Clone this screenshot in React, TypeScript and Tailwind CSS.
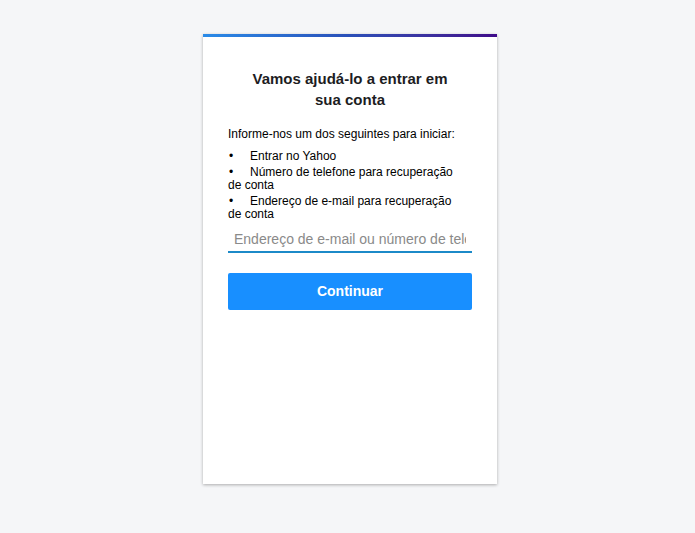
export default function App() {
  return (
    <div
      className="min-h-[533px] w-full bg-[#f5f6f8] pt-[34px]"
      style={{ fontFamily: '"Liberation Sans", Arial, sans-serif' }}
    >
      <div className="ml-[203px] flex h-[450px] w-[294px] flex-col bg-white shadow-[0_1px_3px_rgba(0,0,0,0.3)]">
        <div className="h-[3px] bg-gradient-to-r from-[#2a8be8] via-[#2a4fb8] to-[#3f0a8a]" />
        <div className="flex flex-col px-[25px] pt-[31px]">
          <h1 className="mx-auto w-[215px] text-center text-[15px] font-bold leading-[21px] text-[#1d1d1f]">
            Vamos ajudá-lo a entrar em sua conta
          </h1>
          <p className="mt-[16px] text-[12px] leading-[16px] text-black">
            Informe-nos um dos seguintes para iniciar:
          </p>
          <ul className="mt-[8px] w-[225px] text-[12px] leading-[13px] text-black">
            <li className="mb-[3px]">
              <span className="inline-block w-[22px] pl-[1px]">•</span>Entrar no Yahoo
            </li>
            <li className="mb-[3px]">
              <span className="inline-block w-[22px] pl-[1px]">•</span>Número de telefone para recuperação de conta
            </li>
            <li>
              <span className="inline-block w-[22px] pl-[1px]">•</span>Endereço de e-mail para recuperação de conta
            </li>
          </ul>
          <input
            type="text"
            placeholder="Endereço de e-mail ou número de telefone"
            className="mt-[7px] h-[25px] w-full border-b-2 border-[#1c8ac8] px-[6px] pb-[2px] text-[14px] text-black outline-none placeholder:text-[#8a8a8a]"
          />
          <button className="mt-[20px] h-[37px] w-full rounded-[2px] bg-[#188fff] text-[14px] font-bold text-white">
            Continuar
          </button>
        </div>
      </div>
    </div>
  );
}
